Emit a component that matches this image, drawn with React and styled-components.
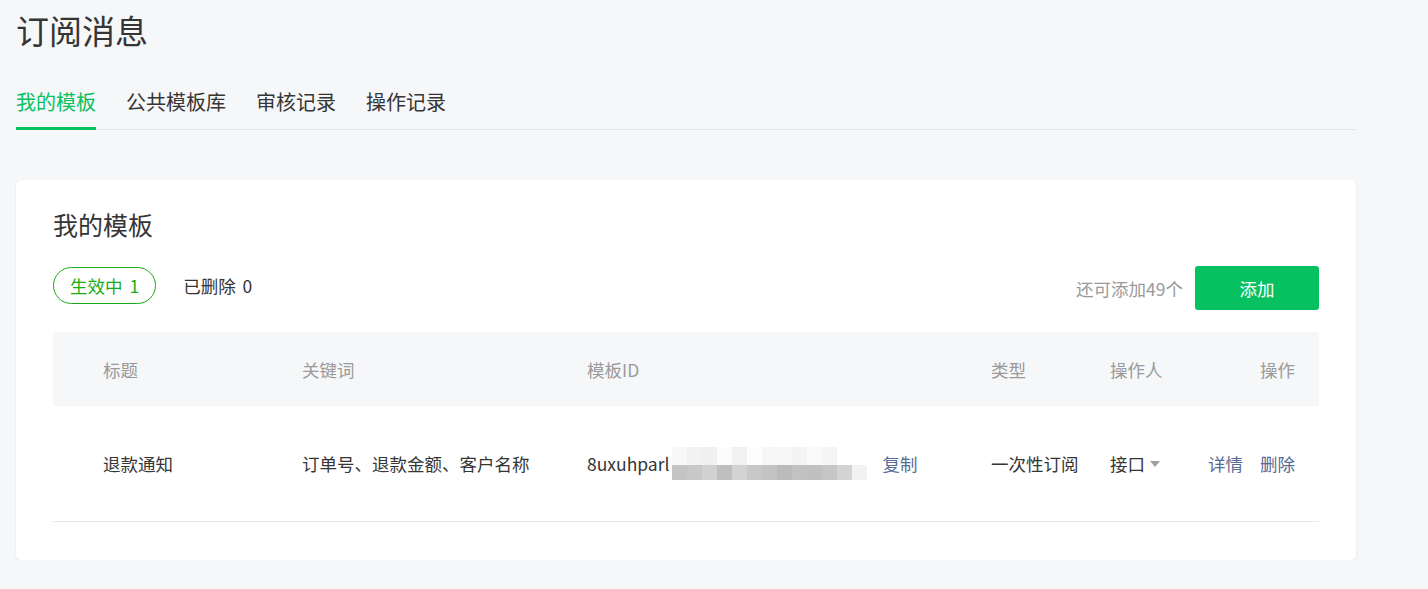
import React from "react";
import styled, { createGlobalStyle } from "styled-components";

const GlobalStyle = createGlobalStyle`
  body {
    margin: 0;
    background: #f6f7f9;
    font-family: "Noto Sans CJK SC", "Microsoft YaHei", sans-serif;
    color: #353535;
  }
`;

const Page = styled.div`
  padding: 0 72px 0 16px;
`;

const Title = styled.h1`
  margin: 0;
  font-size: 33px;
  font-weight: 400;
  line-height: 60px;
  color: #353535;
`;

const TabBar = styled.div`
  display: flex;
  gap: 30px;
  border-bottom: 1px solid #e2e2e2;
`;

const Tab = styled.div`
  font-size: 20px;
  line-height: 28px;
  padding: 28px 0 11px;
  margin-bottom: -1px;
  border-bottom: 3px solid ${(p) => (p.active ? "#07c160" : "transparent")};
  color: ${(p) => (p.active ? "#07c160" : "#353535")};
`;

const Card = styled.div`
  margin-top: 50px;
  background: #fff;
  border-radius: 5px;
  box-shadow: 0 1px 3px rgba(0, 0, 0, 0.08);
  padding: 26px 37px 38px;
`;

const CardTitle = styled.h2`
  margin: 0;
  font-size: 25px;
  font-weight: 400;
  line-height: 36px;
  color: #353535;
`;

const Toolbar = styled.div`
  margin-top: 24px;
  height: 44px;
  display: flex;
  align-items: center;
`;

const Filters = styled.div`
  display: flex;
  align-self: flex-start;
  align-items: center;
  gap: 26px;
  flex: 1;
  margin-top: 1px;
`;

const Pill = styled.div`
  height: 35px;
  line-height: 35px;
  padding: 0 16px;
  border: 1px solid ${(p) => (p.active ? "#1aad19" : "transparent")};
  border-radius: 19px;
  font-size: 17.5px;
  color: ${(p) => (p.active ? "#1aad19" : "#353535")};
  margin-left: ${(p) => (p.active ? "0" : "-16px")};
  word-spacing: 3px;
`;

const Quota = styled.span`
  font-size: 17.5px;
  color: #9a9a9a;
  margin-right: 12px;
`;

const AddButton = styled.button`
  width: 124px;
  height: 44px;
  border: 0;
  border-radius: 3px;
  background: #07c160;
  color: #fff;
  font-family: inherit;
  font-size: 17.5px;
  cursor: pointer;
`;

const Table = styled.div`
  margin-top: 22px;
`;

const Row = styled.div`
  display: grid;
  grid-template-columns: 199px 285px 404px 119px 80px 1fr;
  align-items: center;
  padding: 0 24px 0 50px;
  height: ${(p) => (p.head ? "74px" : "115px")};
  background: ${(p) => (p.head ? "#f6f7f9" : "#fff")};
  border-bottom: ${(p) => (p.head ? "none" : "1px solid #e7e7e7")};
  font-size: 17.5px;
  color: ${(p) => (p.head ? "#9a9a9a" : "#353535")};
`;

const Cell = styled.div`
  display: flex;
  align-items: center;
  justify-content: ${(p) => (p.right ? "flex-end" : "flex-start")};
  gap: ${(p) => p.gap || 0}px;
  white-space: nowrap;
`;

const Link = styled.a`
  color: #576b95;
  text-decoration: none;
  cursor: pointer;
`;

const Mosaic = styled.div`
  display: grid;
  grid-template-columns: repeat(13, 15px);
  grid-template-rows: 18px 15px;
  margin: 0 15px 0 3px;
`;

const Tile = styled.span`
  background: ${(p) => p.color};
`;

const Caret = styled.span`
  margin-left: 5px;
  width: 0;
  height: 0;
  border-left: 5px solid transparent;
  border-right: 5px solid transparent;
  border-top: 6px solid #a0a0a0;
`;

const topTiles = ["#f8f8f8", "#f2f2f2", "#f0f0f0", "#fcfcfc", "#f1f1f1", "#fdfdfd", "#f6f6f6", "#f7f7f7", "#f4f4f4", "#fafafa", "#f5f5f5", "#fff", "#fff"];
const bottomTiles = ["#c4c4c4", "#c8c8c8", "#d1d1d1", "#bfbfbf", "#d3d3d3", "#c8c8c8", "#c3c3c3", "#bbbbbb", "#c2c2c2", "#c0c0c0", "#c6c6c6", "#d3d3d3", "#f2f2f2"];

const tabs = ["我的模板", "公共模板库", "审核记录", "操作记录"];

const App = () => {
  return (
    <Page>
      <GlobalStyle />
      <Title>订阅消息</Title>
      <TabBar>
        {tabs.map((t, i) => (
          <Tab key={t} active={i === 0}>{t}</Tab>
        ))}
      </TabBar>
      <Card>
        <CardTitle>我的模板</CardTitle>
        <Toolbar>
          <Filters>
            <Pill active>生效中 1</Pill>
            <Pill>已删除 0</Pill>
          </Filters>
          <Quota>还可添加49个</Quota>
          <AddButton>添加</AddButton>
        </Toolbar>
        <Table>
          <Row head>
            <Cell>标题</Cell>
            <Cell>关键词</Cell>
            <Cell>模板ID</Cell>
            <Cell>类型</Cell>
            <Cell>操作人</Cell>
            <Cell right>操作</Cell>
          </Row>
          <Row>
            <Cell>退款通知</Cell>
            <Cell>订单号、退款金额、客户名称</Cell>
            <Cell>
              8uxuhparl
              <Mosaic>
                {topTiles.map((c, i) => <Tile key={"t" + i} color={c} />)}
                {bottomTiles.map((c, i) => <Tile key={"b" + i} color={c} />)}
              </Mosaic>
              <Link>复制</Link>
            </Cell>
            <Cell>一次性订阅</Cell>
            <Cell>
              接口
              <Caret />
            </Cell>
            <Cell right gap={17}>
              <Link>详情</Link>
              <Link>删除</Link>
            </Cell>
          </Row>
        </Table>
      </Card>
    </Page>
  );
};

export default App;
